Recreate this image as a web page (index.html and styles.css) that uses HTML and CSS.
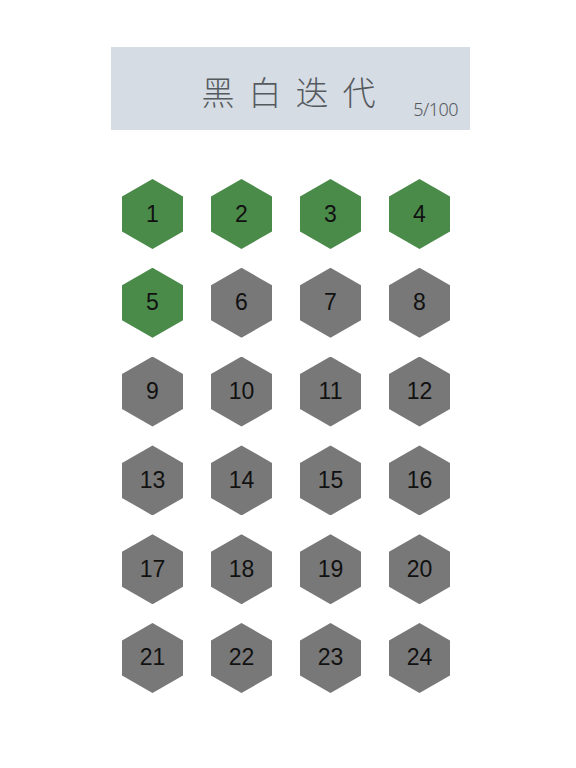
FILE: index.html
```html
<!DOCTYPE html>
<html lang="zh">
<head>
<meta charset="utf-8">
<title>黑白迭代</title>
<link rel="stylesheet" href="styles.css">
</head>
<body>
<div class="page">
  <header class="banner">
    <h1 class="title">黑白迭代</h1>
    <span class="progress">5/100</span>
  </header>
  <main class="grid">
    <div class="hex done">1</div>
    <div class="hex done">2</div>
    <div class="hex done">3</div>
    <div class="hex done">4</div>
    <div class="hex done">5</div>
    <div class="hex">6</div>
    <div class="hex">7</div>
    <div class="hex">8</div>
    <div class="hex">9</div>
    <div class="hex">10</div>
    <div class="hex">11</div>
    <div class="hex">12</div>
    <div class="hex">13</div>
    <div class="hex">14</div>
    <div class="hex">15</div>
    <div class="hex">16</div>
    <div class="hex">17</div>
    <div class="hex">18</div>
    <div class="hex">19</div>
    <div class="hex">20</div>
    <div class="hex">21</div>
    <div class="hex">22</div>
    <div class="hex">23</div>
    <div class="hex">24</div>
  </main>
</div>
</body>
</html>
```

FILE: styles.css
```css
html, body {
  margin: 0;
  padding: 0;
  background: #ffffff;
}

.page {
  width: 576px;
  height: 768px;
  padding-top: 47px;
  box-sizing: border-box;
}

.banner {
  position: relative;
  margin-left: 111px;
  width: 359px;
  height: 83px;
  background: #d5dce4;
  display: flex;
  align-items: center;
  justify-content: center;
}

.title {
  margin: 0;
  padding-left: 10px;
  padding-top: 6px;
  font-family: "Noto Sans CJK SC", "Noto Sans", sans-serif;
  font-weight: 300;
  font-size: 33px;
  letter-spacing: 14px;
  color: #555a5e;
  line-height: 1;
}

.progress {
  position: absolute;
  right: 12px;
  bottom: 9px;
  font-family: "Noto Sans", sans-serif;
  font-weight: 300;
  font-size: 18px;
  letter-spacing: -0.5px;
  color: #55595d;
}

.grid {
  margin-top: 49px;
  margin-left: 122px;
  display: grid;
  grid-template-columns: repeat(4, 61px);
  grid-auto-rows: 70px;
  column-gap: 28px;
  row-gap: 18.8px;
}

.hex {
  width: 61px;
  height: 70px;
  background: #787878;
  clip-path: polygon(50% 0, 100% 25%, 100% 75%, 50% 100%, 0 75%, 0 25%);
  display: flex;
  align-items: center;
  justify-content: center;
  font-family: "Liberation Sans", Arial, sans-serif;
  font-size: 23px;
  color: #111111;
}

.hex.done {
  background: #4a8b4a;
}
```
